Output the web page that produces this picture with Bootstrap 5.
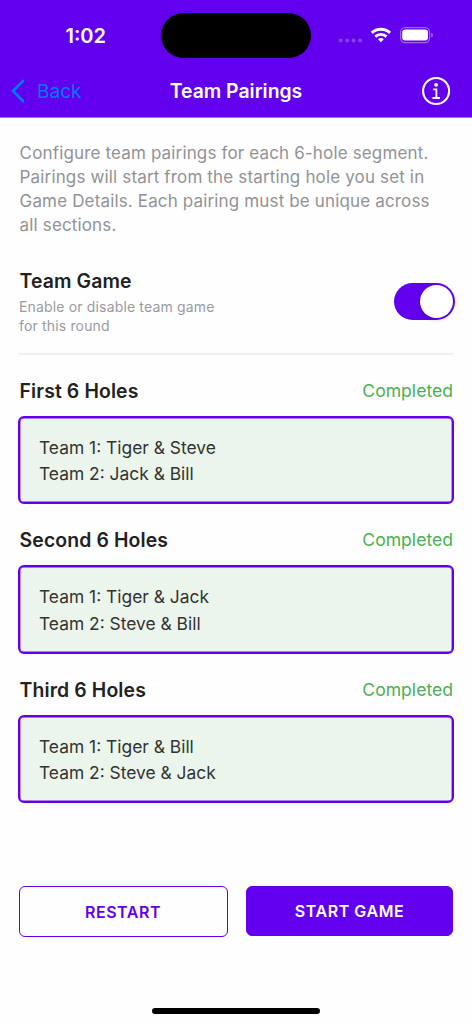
<!DOCTYPE html>
<html lang="en">
<head>
<meta charset="utf-8">
<meta name="viewport" content="width=device-width, initial-scale=1">
<title>Team Pairings</title>
<link href="https://cdn.jsdelivr.net/npm/bootstrap@5.3.0/dist/css/bootstrap.min.css" rel="stylesheet">
<style>
  :root { --brand: #6200ee; }
  body { font-family: Inter, "Liberation Sans", sans-serif; background: #fefefe; color: #222; height: 1024px; overflow: hidden; white-space: nowrap; }
  .app-header { background: var(--brand); height: 118px; color: #fff; border-bottom: 1px solid #a671f2; }
  .status-bar { height: 72px; display: grid; grid-template-columns: 161px 150px 161px; }
  .clock { font-size: 20px; font-weight: 600; line-height: 24px; padding: 24px 0 0 65.5px; }
  .island { margin-top: 13px; height: 45px; border-radius: 23px; background: #000; }
  .title-bar { height: 38px; display: grid; grid-template-columns: 150px 1fr 150px; }
  .back-link { color: #007aff; font-size: 19.1px; line-height: 38px; gap: 11px; padding-left: 11px; }
  .screen-title { font-size: 19.4px; font-weight: 600; line-height: 38px; text-align: center; }
  .content { padding: 23px 19px 0; }
  .intro { font-size: 17px; line-height: 24px; letter-spacing: .15px; padding-left: .6px; color: #929296; }
  .heading { font-size: 19.4px; font-weight: 600; line-height: 26px; letter-spacing: .12px; padding-left: .6px; }
  .hint { font-size: 14px; line-height: 19.4px; letter-spacing: .16px; margin-top: 3px; color: #9a9a9e; }
  .team-switch { margin-top: 31px; }
  .toggle { width: 61px; height: 37px; border-radius: 19px; background: var(--brand); padding: 2px; margin-right: -2px; }
  .knob { width: 33px; height: 33px; border-radius: 50%; background: #fff; box-shadow: -1px 2px 5px rgba(0,0,0,.15); }
  .rule { height: 2px; background: #f0f0f0; margin: 17px 0 23px; }
  .state { font-size: 17.6px; line-height: 26px; color: #4caf50; }
  .pairing { height: 88.5px; margin: 12px -1px 23px; border: 2px solid var(--brand); border-radius: 6px; box-shadow: inset 0 0 0 .4px var(--brand); background: #ebf5ec; padding: 16.8px 19px; font-size: 17.4px; line-height: 26.4px; color: #333; }
  .actions { margin-top: 83px; }
  .action { width: 209px; height: 51px; border-radius: 6px; font-size: 16px; font-weight: 600; letter-spacing: .55px; padding: 0; border: 1px solid var(--brand); color: var(--brand); margin-left: -.5px; }
  .action-fill { background: var(--brand); color: #fff; width: 207px; height: 50px; }
  .home-bar { width: 168px; height: 6px; border-radius: 3px; background: #000; margin: 71px auto 0; }
</style>
</head>
<body>
<header class="app-header">
  <div class="status-bar">
    <div class="clock">1:02</div>
    <div class="island"></div>
    <svg width="161" height="72" viewBox="311 0 161 72" fill="#fff">
      <g opacity=".25"><circle cx="340.7" cy="40.5" r="2.1"/><circle cx="347.2" cy="40.5" r="2.1"/><circle cx="353.6" cy="40.5" r="2.1"/><circle cx="360" cy="40.5" r="2.1"/></g>
      <g fill="none" stroke="#fff" stroke-width="2.9"><path d="M371.8 32.9a13.2 13.2 0 0 1 18.2 0"/><path d="M375.3 36.6a8.1 8.1 0 0 1 11.2 0"/></g>
      <path d="M378 39.2a4.3 4.3 0 0 1 5.8 0L380.9 42.3z"/>
      <rect x="400.6" y="27.6" width="29" height="15" rx="4.7" fill="none" stroke="#fff" stroke-opacity=".4" stroke-width="1.2"/>
      <rect x="402.2" y="29.6" width="25.8" height="11" rx="3"/>
      <path d="M431.2 32.8v4.6q1.8-.7 1.8-2.3t-1.8-2.3z" opacity=".45"/>
    </svg>
  </div>
  <div class="title-bar">
    <a class="back-link d-flex align-items-center text-decoration-none" href="#">
      <svg width="15" height="24" viewBox="0 0 15 24" fill="none" stroke="#007aff" stroke-width="2.7" stroke-linecap="round" stroke-linejoin="round"><path d="M12 2L2 12l10 10"/></svg>
      <span>Back</span>
    </a>
    <div class="screen-title">Team Pairings</div>
    <div class="d-flex justify-content-end align-items-center pe-3">
      <svg width="40" height="30" viewBox="0 0 40 30" fill="none" stroke="#fff"><circle cx="20.1" cy="15" r="13" stroke-width="2.1"/><circle cx="20.1" cy="8.8" r="1.9" fill="#fff" stroke="none"/><path d="M17.2 13.4h3.2v8.6M16.4 22h7.6" stroke-width="1.8"/></svg>
    </div>
  </div>
</header>
<main class="content">
  <p class="intro mb-0">Configure team pairings for each 6-hole segment.<br>Pairings will start from the starting hole you set in<br>Game Details. Each pairing must be unique across<br>all sections.</p>
  <div class="team-switch d-flex justify-content-between align-items-center">
    <div>
      <div class="heading">Team Game</div>
      <div class="hint">Enable or disable team game<br>for this round</div>
    </div>
    <div class="toggle d-flex justify-content-end"><div class="knob"></div></div>
  </div>
  <div class="rule"></div>
  <div class="d-flex justify-content-between"><div class="heading">First 6 Holes</div><div class="state">Completed</div></div>
  <div class="pairing">Team 1: Tiger &amp; Steve<br>Team 2: Jack &amp; Bill</div>
  <div class="d-flex justify-content-between"><div class="heading">Second 6 Holes</div><div class="state">Completed</div></div>
  <div class="pairing">Team 1: Tiger &amp; Jack<br>Team 2: Steve &amp; Bill</div>
  <div class="d-flex justify-content-between"><div class="heading">Third 6 Holes</div><div class="state">Completed</div></div>
  <div class="pairing">Team 1: Tiger &amp; Bill<br>Team 2: Steve &amp; Jack</div>
  <div class="actions d-flex justify-content-between">
    <button class="btn action">RESTART</button>
    <button class="btn action action-fill">START GAME</button>
  </div>
  <div class="home-bar"></div>
</main>
<script src="https://cdn.jsdelivr.net/npm/bootstrap@5.3.0/dist/js/bootstrap.bundle.min.js"></script>
</body>
</html>
